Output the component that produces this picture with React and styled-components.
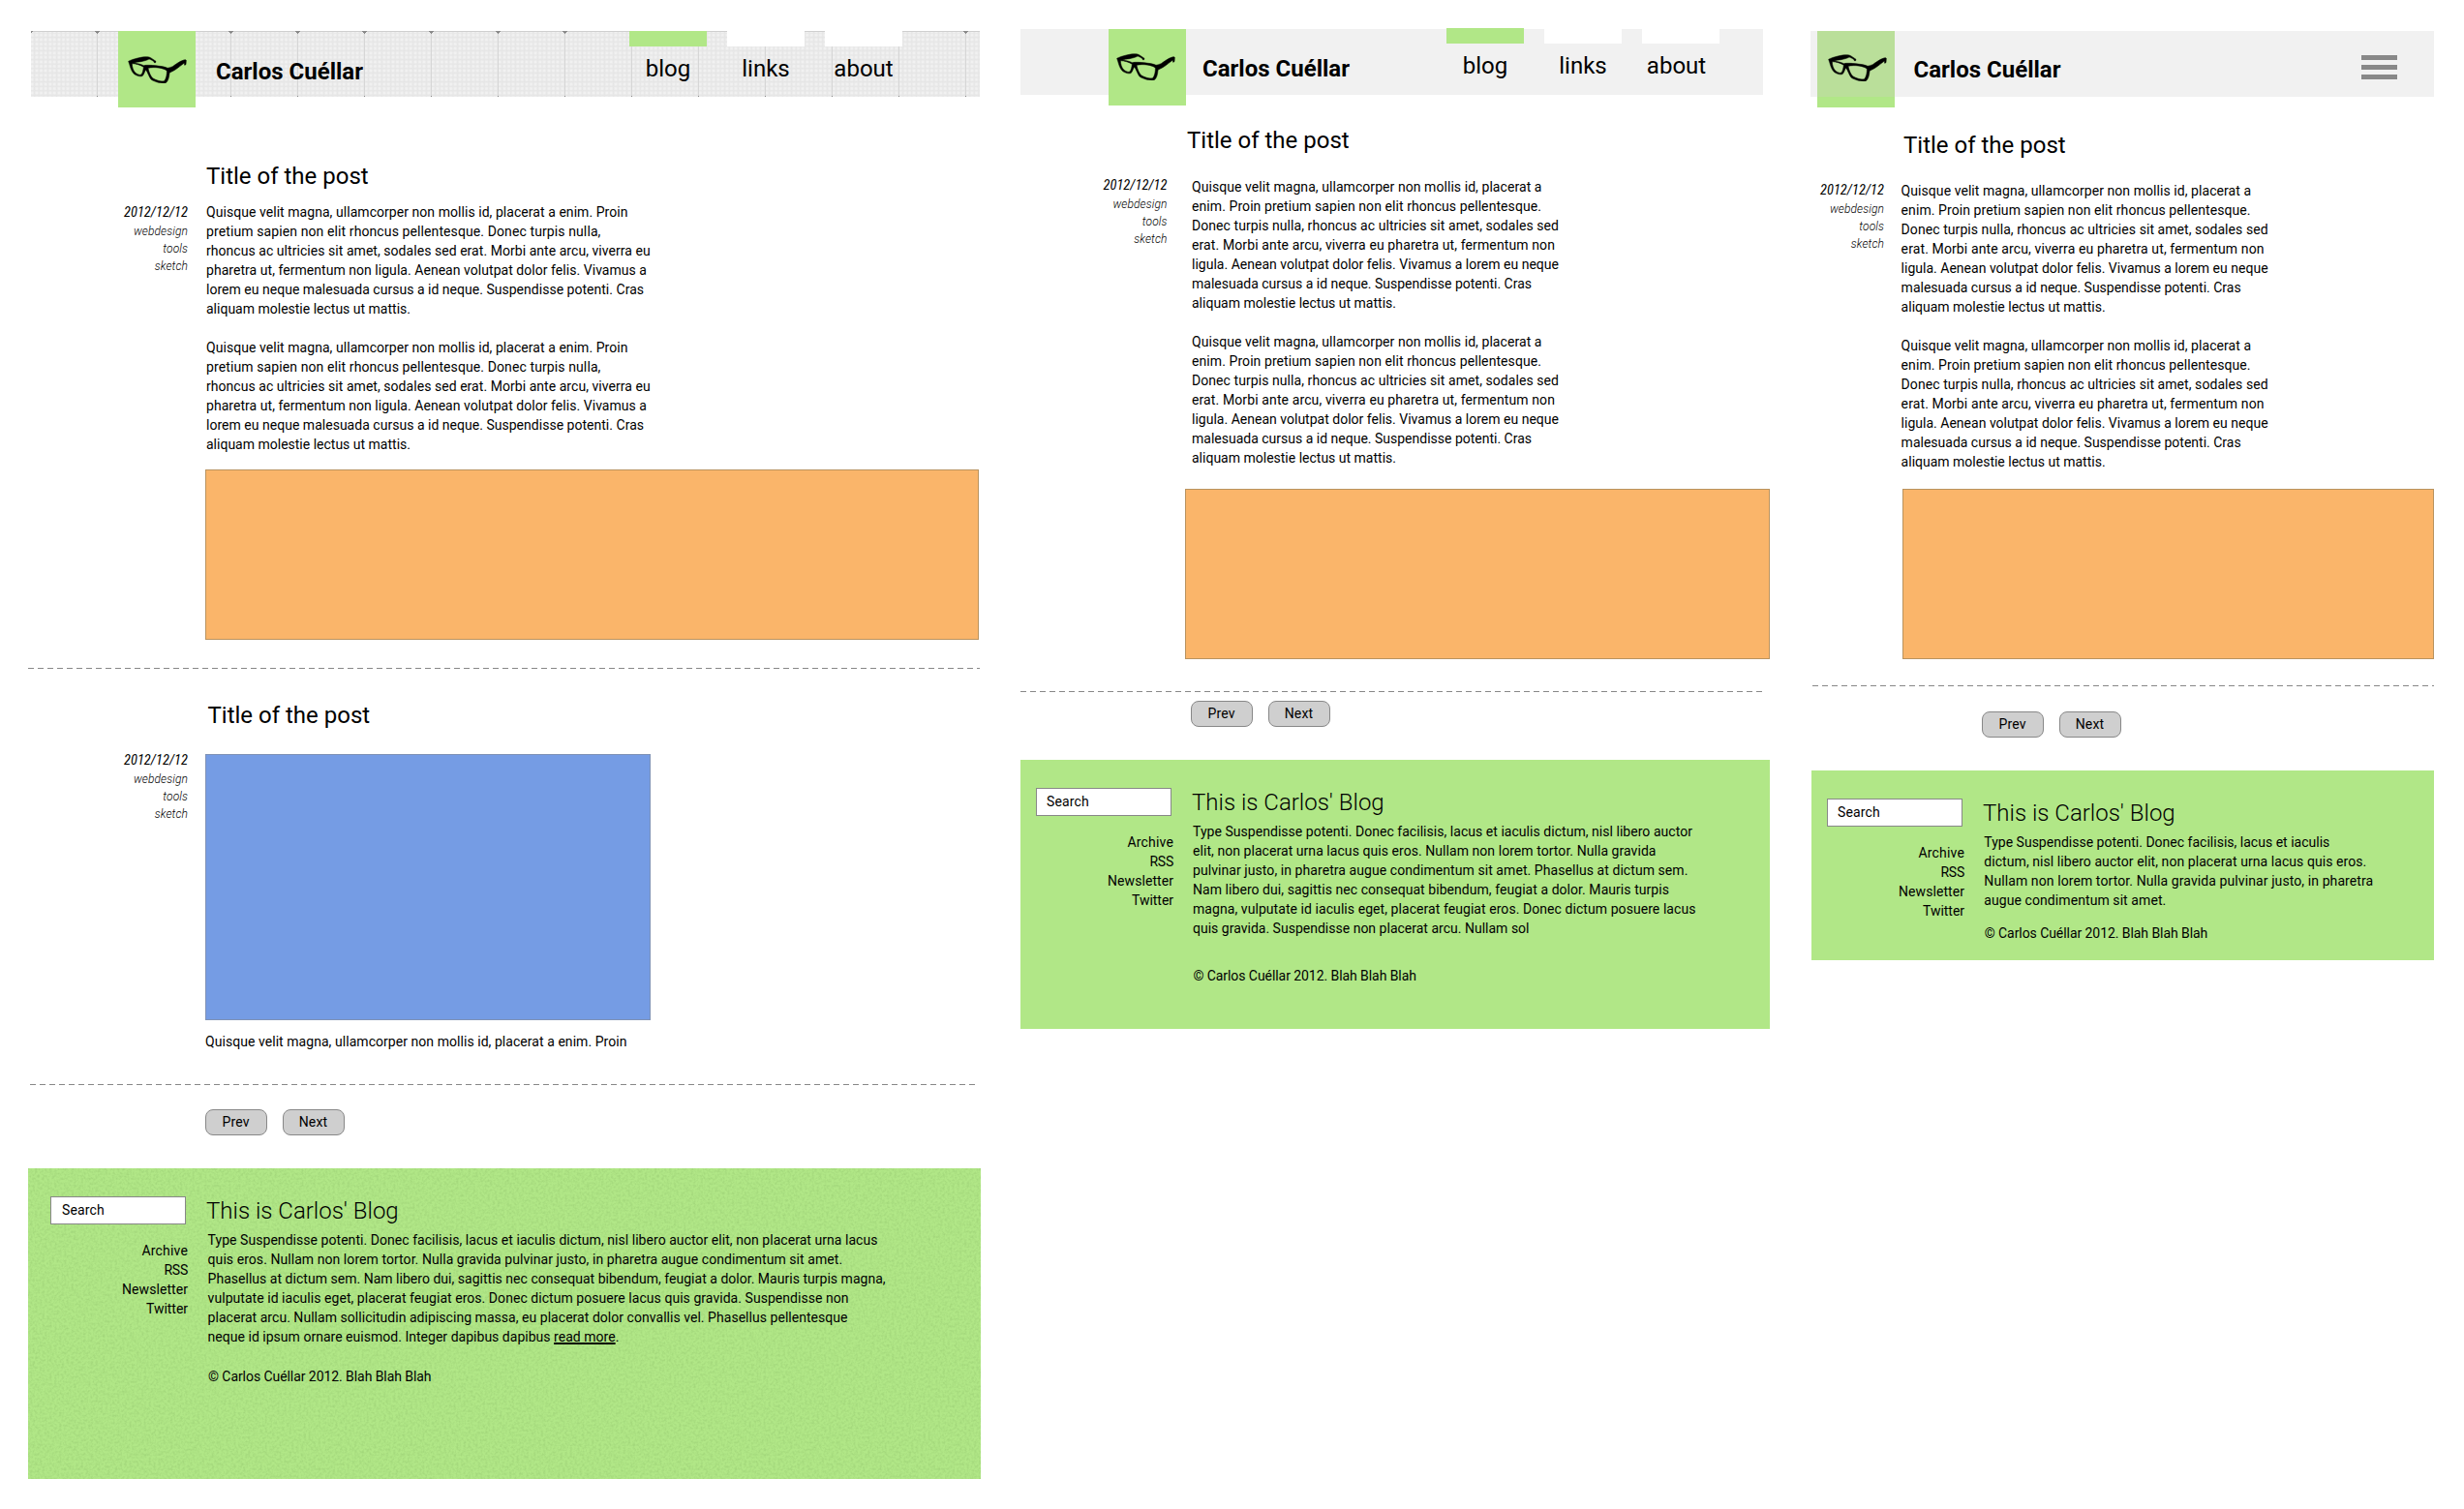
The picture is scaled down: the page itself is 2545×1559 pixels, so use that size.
import React from "react";
import styled, { createGlobalStyle } from "styled-components";

const GREEN = "#b1e787";
const GREY = "#888888";

const GlobalStyle = createGlobalStyle`
  * { box-sizing: border-box; }
  body {
    margin: 0;
    background: #ffffff;
    color: #000000;
    font-family: Roboto, "Liberation Sans", sans-serif;
    font-size: 14px;
    line-height: 20px;
  }
`;

const Board = styled.main`
  display: flex;
  align-items: flex-start;
  padding-left: 29px;
  height: 1559px;
  overflow: hidden;
`;

const Frame = styled.section`
  flex: none;
  display: flex;
  flex-direction: column;
  width: ${(p) => p.$width}px;
  margin-left: ${(p) => p.$gap || 0}px;
  padding-top: ${(p) => p.$top}px;
`;

/* ---------- header ---------- */

const HeaderBar = styled.header`
  display: flex;
  align-items: flex-start;
  height: 68px;
  width: ${(p) => p.$width}px;
  background: #f1f1f1;
`;

/* Graph-paper header: 69px modules split into 15 cells, with a tick on every module line. */
const GridHeaderBar = styled(HeaderBar)`
  margin-left: 3px;
  background:
    linear-gradient(#8a8a8a, #8a8a8a) 0 0 / 2px 1px no-repeat,
    linear-gradient(90deg, #8a8a8a 5px, transparent 5px) 66px 0 / 69px 1px repeat-x,
    linear-gradient(90deg, #8a8a8a 3px, transparent 3px) 67px 1px / 69px 1px repeat-x,
    linear-gradient(90deg, #8a8a8a 1px, transparent 1px) 68px 2px / 69px 1px repeat-x,
    linear-gradient(90deg, #8a8a8a 1px, transparent 1px) 68px 67px / 69px 1px repeat-x,
    linear-gradient(#cfcfcf, #cfcfcf) 0 0 / 100% 1px no-repeat,
    linear-gradient(90deg, #d6d6d6 1px, transparent 1px) 68px 0 / 69px 100% repeat-x,
    repeating-linear-gradient(90deg, #e6e6e6 0, #e6e6e600 1.6px, #e6e6e600 3px, #e6e6e6 4.6px) -1px 0,
    repeating-linear-gradient(180deg, #e6e6e6 0, #e6e6e600 1.6px, #e6e6e600 3px, #e6e6e6 4.6px) 0 2px,
    #f1f1f1;
`;

const Logo = styled.div`
  flex: none;
  width: 80px;
  height: 79px;
  margin-left: ${(p) => p.$left}px;
  padding: ${(p) => p.$iconTop}px 0 0 ${(p) => p.$iconLeft}px;
  background: ${(p) =>
    p.$veiled ? `linear-gradient(#badf9a 68px, ${GREEN} 68px)` : GREEN};
`;

const GlassesSvg = styled.svg`
  display: block;
  width: 61px;
  height: 28px;
`;

const SiteName = styled.h1`
  margin: ${(p) => p.$top}px 0 0 ${(p) => p.$left}px;
  font-size: 24px;
  font-weight: 700;
  line-height: 28px;
  white-space: nowrap;
`;

const Nav = styled.nav`
  display: flex;
  gap: 21px;
  margin: ${(p) => p.$top || 0}px ${(p) => p.$right}px 0 auto;
`;

const NavItem = styled.a`
  display: flex;
  flex-direction: column;
  align-items: center;
  width: 80px;
  font-size: 24px;
  line-height: 28px;
  text-indent: ${(p) => p.$nudge || 0}px;

  &::before {
    content: "";
    width: 80px;
    height: 16px;
    margin-bottom: 9px;
    background: ${(p) => (p.$active ? GREEN : "#ffffff")};
  }
`;

const MenuButton = styled.div`
  display: flex;
  flex-direction: column;
  gap: 5px;
  width: 37px;
  margin: 25px 38px 0 auto;
`;

const MenuBar = styled.span`
  height: 5px;
  background: ${GREY};
`;

/* ---------- posts ---------- */

const Post = styled.article`
  display: grid;
  grid-template-columns: ${(p) => p.$meta}px minmax(0, 1fr);
  column-gap: ${(p) => p.$gutter}px;
  margin-top: ${(p) => p.$top}px;
`;

const PostTitle = styled.h2`
  grid-column: 2;
  margin: 0;
  padding-left: ${(p) => p.$left}px;
  font-size: 24px;
  font-weight: 400;
  line-height: 28px;
`;

const PostMeta = styled.aside`
  margin-top: ${(p) => p.$top}px;
  text-align: right;
  font-style: italic;
`;

const PostDate = styled.div`
  font-family: "Roboto Condensed", Roboto, sans-serif;
  font-size: 14.5px;
  line-height: 21px;
`;

const Tag = styled.div`
  font-size: 12px;
  font-weight: 300;
  line-height: 18px;
  letter-spacing: 0.1px;
`;

const PostBody = styled.div`
  margin-top: ${(p) => p.$top}px;
`;

const Paragraph = styled.p`
  margin: ${(p) => p.$top || 0}px 0 0 ${(p) => p.$left || 0}px;
`;

const Line = styled.span`
  display: block;
  white-space: nowrap;
  letter-spacing: ${(p) => p.$track || 0}px;
`;

const Media = styled.div`
  width: ${(p) => p.$width}px;
  height: ${(p) => p.$height}px;
  margin-top: ${(p) => p.$top || 0}px;
  border: 1px solid ${(p) => (p.$blue ? "#7f92b5" : "#b9935f")};
  background: ${(p) => (p.$blue ? "#759ce4" : "#fab56a")};
`;

const Divider = styled.div`
  flex: none;
  width: ${(p) => p.$width}px;
  height: 1px;
  margin: ${(p) => p.$top}px 0 0 ${(p) => p.$left || 0}px;
  background: repeating-linear-gradient(90deg, ${GREY} 0 6px, transparent 6px 10px);
`;

const Pager = styled.div`
  display: flex;
  gap: 16px;
  margin: ${(p) => p.$top}px 0 0 ${(p) => p.$left}px;
`;

const PagerButton = styled.button`
  width: 64px;
  height: 27px;
  padding: 0 1px 2px 0;
  border: 1px solid ${GREY};
  border-radius: 8px;
  background: #cfcfcf;
  color: #000000;
  font: inherit;
  letter-spacing: 0.15px;
`;

/* ---------- footer ---------- */

const Footer = styled.footer`
  position: relative;
  display: flex;
  align-items: flex-start;
  height: ${(p) => p.$height}px;
  margin: 34px 0 0 ${(p) => p.$left || 0}px;
  padding: 29px 0 0 ${(p) => p.$pad}px;
  background: ${GREEN};
`;

const Grain = styled.svg`
  position: absolute;
  inset: 0;
  width: 100%;
  height: 100%;
`;

const Side = styled.div`
  position: relative;
  flex: none;
  width: 142px;
`;

const SearchField = styled.div`
  width: 140px;
  height: 29px;
  padding: 3px 0 0 ${(p) => p.$inset}px;
  border: 1px solid ${GREY};
  background: #ffffff;
  letter-spacing: 0.16px;
`;

const SideLinks = styled.div`
  display: flex;
  flex-direction: column;
  align-items: flex-end;
  margin-top: 17px;
`;

const About = styled.div`
  position: relative;
  margin-left: 19px;
  padding-top: 1px;
`;

const AboutTitle = styled.h3`
  margin: 0 0 6px;
  font-size: 24px;
  font-weight: 300;
  line-height: 28px;
  white-space: nowrap;
`;

const ReadMore = styled.a`
  text-decoration: underline;
  text-decoration-thickness: 2px;
  text-underline-offset: 1px;
  text-decoration-skip-ink: none;
`;

/* ---------- content ---------- */

const WIDE_TEXT = [
  ["Quisque velit magna, ullamcorper non mollis id, placerat a enim. Proin", 0.052],
  ["pretium sapien non elit rhoncus pellentesque. Donec turpis nulla,", 0.104],
  ["rhoncus ac ultricies sit amet, sodales sed erat. Morbi ante arcu, viverra eu", 0.047],
  ["pharetra ut, fermentum non ligula. Aenean volutpat dolor felis. Vivamus a", 0.043],
  ["lorem eu neque malesuada cursus a id neque. Suspendisse potenti. Cras", 0.021],
  ["aliquam molestie lectus ut mattis.", 0],
];

const NARROW_TEXT = [
  ["Quisque velit magna, ullamcorper non mollis id, placerat a", 0.063],
  ["enim. Proin pretium sapien non elit rhoncus pellentesque.", 0.079],
  ["Donec turpis nulla, rhoncus ac ultricies sit amet, sodales sed", 0.067],
  ["erat. Morbi ante arcu, viverra eu pharetra ut, fermentum non", 0.114],
  ["ligula. Aenean volutpat dolor felis. Vivamus a lorem eu neque", 0.012],
  ["malesuada cursus a id neque. Suspendisse potenti. Cras", 0],
  ["aliquam molestie lectus ut mattis.", 0],
];

const ABOUT_WIDE = [
  ["Type Suspendisse potenti. Donec facilisis, lacus et iaculis dictum, nisl libero auctor elit, non placerat urna lacus", 0.048],
  ["quis eros. Nullam non lorem tortor. Nulla gravida pulvinar justo, in pharetra augue condimentum sit amet.", 0.059],
  ["Phasellus at dictum sem. Nam libero dui, sagittis nec consequat bibendum, feugiat a dolor. Mauris turpis magna,", 0.023],
  ["vulputate id iaculis eget, placerat feugiat eros. Donec dictum posuere lacus quis gravida. Suspendisse non", 0.046],
  ["placerat arcu. Nullam sollicitudin adipiscing massa, eu placerat dolor convallis vel. Phasellus pellentesque", 0.038],
  [<>neque id ipsum ornare euismod. Integer dapibus dapibus <ReadMore>read more</ReadMore>.</>, 0.022],
];

const ABOUT_MEDIUM = [
  ["Type Suspendisse potenti. Donec facilisis, lacus et iaculis dictum, nisl libero auctor", 0.039],
  ["elit, non placerat urna lacus quis eros. Nullam non lorem tortor. Nulla gravida", 0.056],
  ["pulvinar justo, in pharetra augue condimentum sit amet. Phasellus at dictum sem.", 0.068],
  ["Nam libero dui, sagittis nec consequat bibendum, feugiat a dolor. Mauris turpis", 0.055],
  ["magna, vulputate id iaculis eget, placerat feugiat eros. Donec dictum posuere lacus", 0.065],
  ["quis gravida. Suspendisse non placerat arcu. Nullam sol", 0.009],
];

const ABOUT_SMALL = [
  ["Type Suspendisse potenti. Donec facilisis, lacus et iaculis", 0.009],
  ["dictum, nisl libero auctor elit, non placerat urna lacus quis eros.", 0.065],
  ["Nullam non lorem tortor. Nulla gravida pulvinar justo, in pharetra", 0.094],
  ["augue condimentum sit amet.", 0.078],
];

const LINKS = [
  ["Archive", 0.17],
  ["RSS", -0.25],
  ["Newsletter", 0.067],
  ["Twitter", -0.03],
];

function Lines({ items }) {
  return items.map(([text, track], i) => (
    <Line key={i} $track={track}>{text}</Line>
  ));
}

function Glasses() {
  return (
    <GlassesSvg viewBox="41 87 183 84" preserveAspectRatio="none" aria-hidden="true">
      <path
        fillRule="evenodd"
        stroke="#000000"
        strokeWidth="1.6"
        strokeLinejoin="round"
        d="M43 103 C50 99 60 96 72 93 C84 90 96 88 107 90 C113 92 122 99 128 103 L127 107 L123 107 L121 103 C116 100 112 97 107 96 C102 99 92 102 82 104 C72 105 64 106 60 108 C72 110 82 112 90 116 C100 114 120 115 140 118 C150 119 158 121 164 124 C170 123 175 121 180 119 C190 112 202 103 212 100 C216 98 221 97 222 100 L221 113 L217 115 L216 108 C208 114 196 124 188 129 C182 133 175 136 170 139 C169 152 166 166 158 170 C144 173 124 166 114 160 C108 154 103 138 97 129 C94 132 92 142 87 148 C80 152 68 148 60 142 C52 134 49 122 46 112 Z
           M54 110 C54 120 58 132 64 138 C70 143 79 147 83 144 C88 138 89 128 90 121 C82 115 66 110 54 110 Z
           M104 124 C106 136 112 150 119 156 C128 161 144 167 154 164 C160 158 163 142 162 132 C154 124 122 119 104 124 Z"
      />
    </GlassesSvg>
  );
}

function Meta({ top }) {
  return (
    <PostMeta $top={top}>
      <PostDate>2012/12/12</PostDate>
      <Tag>webdesign</Tag>
      <Tag>tools</Tag>
      <Tag>sketch</Tag>
    </PostMeta>
  );
}

function Navigation({ right, top, lastNudge }) {
  return (
    <Nav $right={right} $top={top}>
      <NavItem $active>blog</NavItem>
      <NavItem>links</NavItem>
      <NavItem $nudge={lastNudge}>about</NavItem>
    </Nav>
  );
}

function Paging({ top, left }) {
  return (
    <Pager $top={top} $left={left}>
      <PagerButton>Prev</PagerButton>
      <PagerButton>Next</PagerButton>
    </Pager>
  );
}

function SiteFooter({ height, left, pad, grain, text, copyTop, shift, inset = 10 }) {
  return (
    <Footer $height={height} $left={left} $pad={pad}>
      {grain && (
        <Grain aria-hidden="true">
          <filter id="grain" x="0" y="0" width="100%" height="100%" colorInterpolationFilters="sRGB">
            <feTurbulence type="fractalNoise" baseFrequency="0.4" numOctaves="2" seed="4" />
            <feColorMatrix values="0 0 0 0 0.42  0 0 0 0 0.6  0 0 0 0 0.3  1.6 0 0 0 -0.6" />
          </filter>
          <rect width="100%" height="100%" filter="url(#grain)" opacity="0.26" />
        </Grain>
      )}
      <Side>
        <SearchField $inset={inset}>Search</SearchField>
        <SideLinks>
          <Lines items={LINKS} />
        </SideLinks>
      </Side>
      <About>
        <AboutTitle>This is Carlos' Blog</AboutTitle>
        <Paragraph $left={shift}>
          <Lines items={text} />
        </Paragraph>
        <Paragraph $top={copyTop} $left={shift + 0.4}>
          <Line $track={-0.064}>© Carlos Cuéllar 2012. Blah Blah Blah</Line>
        </Paragraph>
      </About>
    </Footer>
  );
}

function DesktopFrame() {
  return (
    <Frame $width={984} $top={32}>
      <GridHeaderBar $width={980}>
        <Logo $left={90} $iconLeft={10} $iconTop={26}>
          <Glasses />
        </Logo>
        <SiteName $top={28} $left={21}>Carlos Cuéllar</SiteName>
        <Navigation right={80} />
      </GridHeaderBar>
      <Post $top={68} $meta={165} $gutter={18}>
        <PostTitle $left={1}>Title of the post</PostTitle>
        <Meta top={12.5} />
        <PostBody $top={13}>
          <Paragraph $left={1}><Lines items={WIDE_TEXT} /></Paragraph>
          <Paragraph $top={20} $left={1}><Lines items={WIDE_TEXT} /></Paragraph>
          <Media $top={16} $width={799} $height={176} />
        </PostBody>
      </Post>
      <Divider $top={29} $width={983} />
      <Post $top={34} $meta={165} $gutter={18}>
        <PostTitle $left={2.5}>Title of the post</PostTitle>
        <Meta top={21.5} />
        <PostBody $top={26}>
          <Media $blue $width={460} $height={275} />
          <Paragraph $top={12}><Lines items={WIDE_TEXT.slice(0, 1)} /></Paragraph>
        </PostBody>
      </Post>
      <Divider $top={34} $left={2} $width={977} />
      <Paging top={25} left={183} />
      <SiteFooter grain height={321} pad={23} text={ABOUT_WIDE} copyTop={21} shift={1.6} inset={11} />
    </Frame>
  );
}

function TabletFrame() {
  return (
    <Frame $width={774} $gap={41} $top={30}>
      <HeaderBar $width={767}>
        <Logo $left={91} $iconLeft={8} $iconTop={25}>
          <Glasses />
        </Logo>
        <SiteName $top={27} $left={17}>Carlos Cuéllar</SiteName>
        <Navigation right={45} top={-1} lastNudge={-9} />
      </HeaderBar>
      <Post $top={33} $meta={151.5} $gutter={18.5}>
        <PostTitle $left={2}>Title of the post</PostTitle>
        <Meta top={21.5} />
        <PostBody $top={24}>
          <Paragraph $left={7}><Lines items={NARROW_TEXT} /></Paragraph>
          <Paragraph $top={20} $left={7}><Lines items={NARROW_TEXT} /></Paragraph>
          <Media $top={22} $width={604} $height={176} />
        </PostBody>
      </Post>
      <Divider $top={33} $width={767} />
      <Paging top={9} left={176} />
      <SiteFooter height={278} pad={16} text={ABOUT_MEDIUM} copyTop={29} shift={1} />
    </Frame>
  );
}

function MobileFrame() {
  return (
    <Frame $width={644} $gap={42} $top={32}>
      <HeaderBar $width={644}>
        <Logo $veiled $left={7} $iconLeft={11} $iconTop={24}>
          <Glasses />
        </Logo>
        <SiteName $top={26} $left={19.5}>Carlos Cuéllar</SiteName>
        <MenuButton>
          <MenuBar />
          <MenuBar />
          <MenuBar />
        </MenuButton>
      </HeaderBar>
      <Post $top={36} $meta={76} $gutter={19}>
        <PostTitle $left={1}>Title of the post</PostTitle>
        <Meta top={21.5} />
        <PostBody $top={23}>
          <Paragraph $left={-1.4}><Lines items={NARROW_TEXT} /></Paragraph>
          <Paragraph $top={20} $left={-1.4}><Lines items={NARROW_TEXT} /></Paragraph>
          <Media $top={18} $width={549} $height={176} />
        </PostBody>
      </Post>
      <Divider $top={27} $left={2} $width={642} />
      <Paging top={26} left={177} />
      <SiteFooter height={196} left={1} pad={16} text={ABOUT_SMALL} copyTop={14} shift={1.3} />
    </Frame>
  );
}

export default function App() {
  return (
    <>
      <GlobalStyle />
      <Board>
        <DesktopFrame />
        <TabletFrame />
        <MobileFrame />
      </Board>
    </>
  );
}
